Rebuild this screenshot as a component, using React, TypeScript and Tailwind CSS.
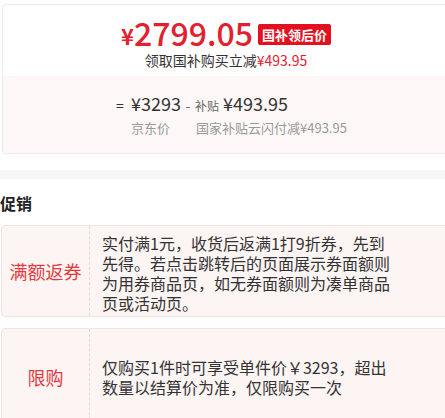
type Promo = {
  label: string;
  text: string;
  height: string;
  align: string;
};

const promos: Promo[] = [
  {
    label: "满额返券",
    text: "实付满1元，收货后返满1打9折券，先到先得。若点击跳转后的页面展示券面额则为用券商品页，如无券面额则为凑单商品页或活动页。",
    height: "h-[92px]",
    align: "items-start pt-[7px]",
  },
  {
    label: "限购",
    text: "仅购买1件时可享受单件价￥3293，超出数量以结算价为准，仅限购买一次",
    height: "h-[98px]",
    align: "items-center",
  },
];

const PriceCard = () => {
  return (
    <div className="ml-[2px] mt-[4px] flex h-[150px] flex-col overflow-hidden rounded-[4px] border border-[#ebebeb] bg-white">
      <div className="flex flex-col items-center pt-[11px] pb-[6px]">
        <div className="flex items-end">
          <span className="mb-[2px] text-[22px] font-bold leading-[22px] text-[#e4202e]">¥</span>
          <span className="text-[32px] font-medium leading-[32px] text-[#e4202e]">2799.05</span>
          <span className="mb-[3px] ml-[5px] flex h-[21px] items-center rounded-[2px] bg-[#e3111f] px-[4px] text-[13px] font-bold text-white">
            国补领后价
          </span>
        </div>
        <div className="mt-[3px] text-[14px] leading-[19px] text-[#333]">
          领取国补购买立减<span className="text-[#e4202e]">¥493.95</span>
        </div>
      </div>
      <div className="flex-1 bg-[#fdf8f7] pl-[113px] pt-[15px]">
        <div className="flex items-baseline leading-[24px] text-[#333]">
          <span className="w-[15px] text-[14px]">=</span>
          <span className="w-[50px] text-[18px]">¥3293</span>
          <span className="w-[14px] text-center text-[14px] text-[#666]">-</span>
          <span className="text-[12px] text-[#666]">补贴</span>
          <span className="ml-[4px] text-[18px]">¥493.95</span>
        </div>
        <div className="ml-[15px] mt-[1px] flex text-[13px] leading-[18px] text-[#999]">
          <span className="w-[65px]">京东价</span>
          <span>国家补贴云闪付减¥493.95</span>
        </div>
      </div>
    </div>
  );
};

const PromoRow = ({ promo }: { promo: Promo }) => {
  return (
    <div className={`ml-[1px] flex rounded-[4px] border border-[#f3e4e4] bg-[#fdf4f4] ${promo.height}`}>
      <div className="flex w-[88px] shrink-0 items-center justify-center border-r border-dashed border-[#e6d6d6] text-[18px] text-[#e4393c]">
        {promo.label}
      </div>
      <div className={`flex flex-1 pl-[12px] ${promo.align}`}>
        <p className="w-[290px] text-[16px] leading-[20px] text-[#333]">{promo.text}</p>
      </div>
    </div>
  );
};

export default function App() {
  return (
    <div className="h-[418px] w-[445px] overflow-hidden bg-white font-['Noto_Sans_CJK_SC',sans-serif]">
      <div className="w-[450px]">
        <PriceCard />
        <div className="mt-[16px] h-[9px] bg-[#f6f6f9]" />
        <div className="mt-[12px] text-[16px] font-bold leading-[24px] text-[#222]">促销</div>
        <div className="mt-[10px] flex flex-col gap-[11px]">
          {promos.map((p) => (
            <PromoRow key={p.label} promo={p} />
          ))}
        </div>
      </div>
    </div>
  );
}
